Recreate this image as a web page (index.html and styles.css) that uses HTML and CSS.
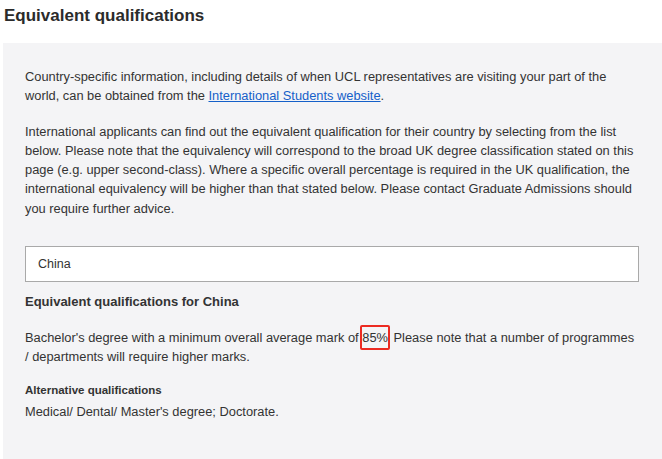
FILE: index.html
```html
<!DOCTYPE html>
<html>
<head>
<meta charset="utf-8">
<link rel="stylesheet" href="styles.css">
</head>
<body>
<h2 class="title">Equivalent qualifications</h2>
<div class="panel">
  <p class="para">Country-specific information, including details of when UCL representatives are visiting your part of the world, can be obtained from the <a class="link" href="#">International Students website</a>.</p>
  <p class="para">International applicants can find out the equivalent qualification for their country by selecting from the list below. Please note that the equivalency will correspond to the broad UK degree classification stated on this page (e.g. upper second-class). Where a specific overall percentage is required in the UK qualification, the international equivalency will be higher than that stated below. Please contact Graduate Admissions should you require further advice.</p>
  <div class="select">China</div>
  <h3 class="subtitle">Equivalent qualifications for China</h3>
  <p class="para">Bachelor's degree with a minimum overall average mark of <span class="mark">85%</span> Please note that a number of programmes / departments will require higher marks.</p>
  <h4 class="alt-title">Alternative qualifications</h4>
  <p class="alt-text">Medical/ Dental/ Master's degree; Doctorate.</p>
</div>
</body>
</html>
```
FILE: styles.css
```css
html, body {
  margin: 0;
  padding: 0;
  background: #ffffff;
  font-family: "Liberation Sans", Arial, sans-serif;
  color: #333333;
}
.title {
  margin: 0;
  padding: 6px 0 0 4px;
  height: 37px;
  box-sizing: border-box;
  font-size: 17px;
  font-weight: bold;
  color: #2b2b2b;
}
.panel {
  margin-left: 3px;
  background: #f4f4f6;
  padding: 24px 25px 40px 22px;
  min-height: 416px;
  box-sizing: border-box;
  margin-top: 6px;
}
.para {
  margin: 0 0 16px 0;
  font-size: 12.85px;
  line-height: 19.3px;
}
.link {
  color: #1560c9;
  text-decoration: underline;
}
.select {
  margin-top: 28px;
  height: 36px;
  box-sizing: border-box;
  border: 1px solid #a9a9a9;
  background: #ffffff;
  padding: 0 12px;
  display: flex;
  align-items: center;
  font-size: 12.5px;
  width: 614px;
}
.subtitle {
  margin: 11px 0 18px 0;
  font-size: 13px;
  font-weight: bold;
  line-height: 17px;
}
.mark {
  border: 2px solid #ec2b22;
  border-radius: 2px;
  padding: 3px 0 3px 0;
  margin-left: -2px;
}
.alt-title {
  margin: -1px 0 3px 0;
  font-size: 11.5px;
  font-weight: bold;
  line-height: 17px;
}
.alt-text {
  margin: 0;
  font-size: 12.85px;
  line-height: 19px;
}
```
